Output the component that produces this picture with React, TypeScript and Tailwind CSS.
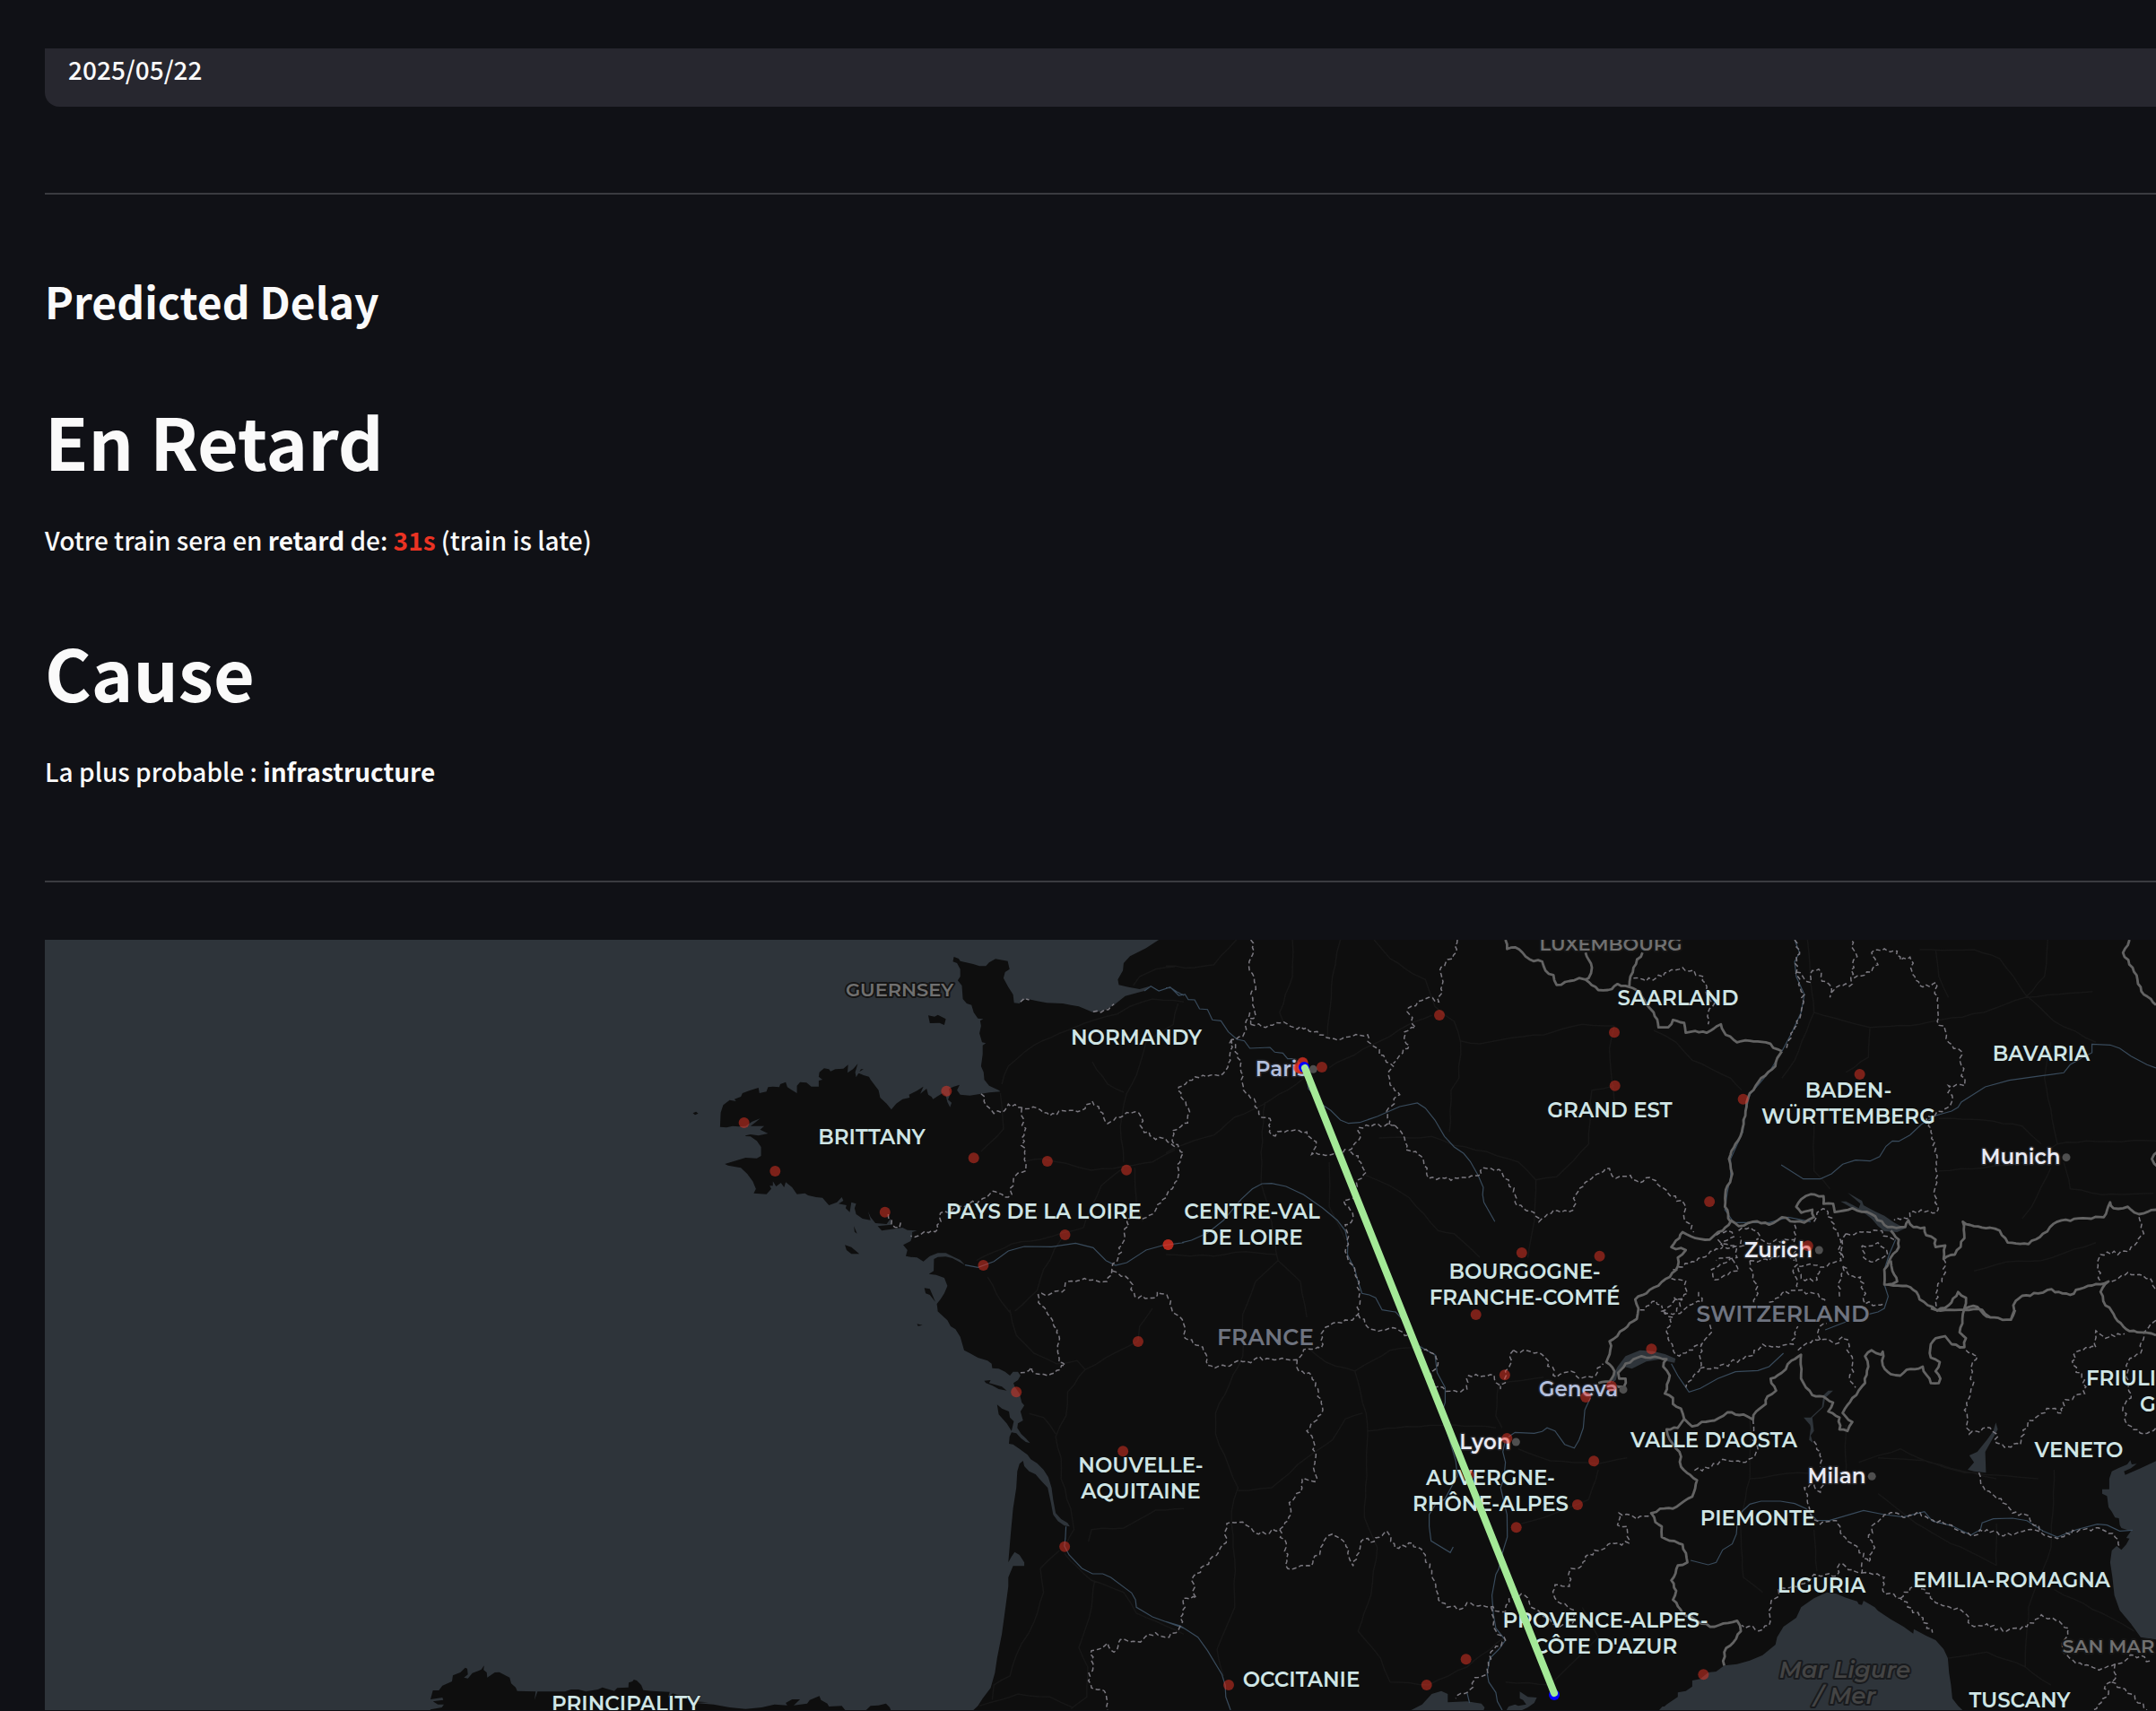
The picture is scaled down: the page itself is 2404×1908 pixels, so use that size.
import React from "react";

/* ---------- map geometry ---------- */

type Pt = [number, number];
type Tile = "A" | "B" | "C" | "D" | "E" | "F" | "G";
type Line = [Tile, string];

// Each survey tile has its own origin and scale.
const TILES: Record<Tile, [number, number, number, number]> = {
  A: [760, 1030, 2.8, 3],
  B: [1300, 1030, 2.8, 3],
  C: [1844, 1030, 2.8, 3],
  D: [760, 1460, 2.8, 3],
  E: [1300, 1460, 2.8, 3],
  F: [1844, 1460, 2.8, 3],
  G: [440, 1820, 3, 3],
};

function pts([tile, s]: Line): Pt[] {
  const [ox, oy, sx, sy] = TILES[tile];
  return s
    .trim()
    .split(/\s+/)
    .map((p) => {
      const [x, y] = p.split(",").map(Number);
      return [ox + x / sx, oy + y / sy] as Pt;
    });
}

function noise(n: number) {
  const v = Math.sin(n * 12.9898) * 43758.5453;
  return (v - Math.floor(v)) * 2 - 1;
}

// Midpoint displacement gives borders and coasts their irregular outline.
function roughen(p: Pt[], amount: number, step: number): Pt[] {
  const out: Pt[] = [p[0]];
  for (let i = 1; i < p.length; i++) {
    const [x0, y0] = p[i - 1];
    const [x1, y1] = p[i];
    const len = Math.hypot(x1 - x0, y1 - y0);
    const n = Math.max(1, Math.round(len / step));
    for (let k = 1; k < n; k++) {
      const t = k / n;
      const d = noise(x0 * 1.7 + y0 * 0.9 + k * 3.1) * amount;
      out.push([x0 + (x1 - x0) * t - ((y1 - y0) / len) * d, y0 + (y1 - y0) * t + ((x1 - x0) / len) * d]);
    }
    out.push([x1, y1]);
  }
  return out;
}

const toPath = (p: Pt[]) => "M" + p.map(([x, y]) => x.toFixed(1) + " " + y.toFixed(1)).join("L");
const toLines = (l: Line[], amount: number, step: number) =>
  l.map((x) => toPath(amount ? roughen(pts(x), amount, step) : pts(x))).join("");
const toArea = (l: Line[]) => toPath(l.flatMap(pts)) + "Z";

const atlantic: Line[] = [
  ["A", "-1988,57 1490,57 1450,85 1400,112 1380,135 1378,160 1362,190 1365,208 1395,215 1430,222 1462,212 1445,228 1385,245 1350,275 1320,293 1285,300 1240,280 1215,275 1190,270 1140,268 1110,262 1080,255 1060,262 1055,270 1038,268 1035,240 1020,215 1005,185 1010,165 1024,155 1018,128 980,121 960,133 950,145 930,145 910,138 870,128 865,120 850,114 847,130 860,135 870,155 870,180 862,193 875,210 878,255 890,270 905,275 912,300 925,320 942,322 932,328 935,345 930,370 938,400 950,403 940,410 940,440 935,480 943,500 945,525 960,545 990,560 995,565 960,568 935,572 900,578 870,575 860,560 868,542 850,548 835,555 838,575 832,592 843,602 838,617 830,600 825,580 815,570 800,580 785,590 780,582 770,575 765,555 745,572 755,548 735,562 710,575 712,585 690,590 670,605 655,625 640,605 620,585 615,560 590,525 585,515 568,510 550,502 568,490 560,490 545,517 542,500 550,472 535,490 518,502 520,475 505,488 480,490 465,497 460,490 445,487 430,500 428,515 440,525 428,528 428,548 405,548 390,535 370,533 360,545 360,570 345,560 330,550 325,533 308,540 305,550 285,548 270,550 265,565 243,570 240,552 215,560 190,570 185,582 165,590 170,597 150,593 130,610 122,635 120,683 140,685 160,680 178,682 200,680 220,665 245,655 230,668 215,680 240,680 258,680 245,692 270,705 240,712 215,708 200,712 190,735 180,752 180,725 160,715 178,708 178,690 182,706 200,714 215,715 235,730 248,750 248,780 235,788 200,786 165,797 135,807 145,812 185,820 205,840 222,865 232,890 225,905 265,908 280,890 275,880 285,880 285,865 295,882 310,870 320,885 325,868 345,885 360,908 385,905 395,912 420,918 440,920 460,945 485,935 500,918 505,930 490,940 515,945 512,955 525,968 530,935 545,940 540,955 545,975 565,990 590,995 582,965 590,985 605,1005 640,1008 652,990 655,1010 612,1015 625,1030 655,1025 690,1020 705,1028 735,1030 720,1035 720,1050 715,1065 692,1078 705,1095 700,1115 715,1118 735,1120 755,1133 775,1115 800,1105 825,1105 850,1118 870,1128 885,1145 865,1133 845,1122 825,1117 800,1118 788,1125 787,1165 772,1175 795,1178 820,1188 830,1215 820,1240 808,1260 797,1275 800,1300"],
  ["D", "795,5 810,20 830,40 840,60 855,70 870,95 878,125 882,140 900,150 925,165 955,175 968,185 970,200 990,202 1010,212 1025,225 1035,212 1050,212 1058,225 1050,240 1036,250 1040,262 1055,285 1062,315 1070,325 1058,345 1066,375 1050,385 1048,400 1060,420 1075,435 1088,451 1075,447 1060,435 1045,418 1030,415 1024,430 1022,453 1035,455 1055,470 1080,490 1090,505 1110,518 1130,540 1145,565 1155,600 1160,640 1168,685 1185,705 1205,718 1212,730 1195,727 1175,712 1160,690 1153,650 1143,600 1125,580 1105,555 1085,545 1070,528 1066,510 1055,520 1048,545 1045,600 1035,670 1028,750 1020,850 1030,830 1040,815 1055,825 1070,850 1070,862 1035,862 1028,880 1020,900 1020,930 1010,1010 1000,1090 985,1170 978,1220 965,1270 940,1305 925,1330 905,1350 655,1350 650,1335 638,1322 615,1328 590,1330 570,1350 515,1350 500,1330 460,1332 455,1322 435,1310 430,1297 400,1310 392,1322 350,1328 370,1308 345,1308 325,1320 330,1328 290,1325 250,1335 200,1340 150,1335 100,1325 40,1320"],
  ["G", "1050,238 1000,235 960,218 930,208 915,222 920,203 860,200 832,197 825,180 810,165 800,162 796,168 783,172 782,188 745,190 735,200 695,188 680,195 640,202 615,195 590,195 570,202 478,202 468,230 472,202 410,200 405,188 390,175 385,155 350,137 335,138 310,155 308,138 298,130 299,115 290,128 280,133 260,140 245,158 232,155 245,145 243,125 236,122 220,138 195,148 192,168 160,182 148,198 128,198 120,228 160,222 163,230 128,235 145,245 165,245 158,255 120,262 118,270 -1170,270"],
];

const waters: Line[][] = [
  atlantic,
  [["F", "15,1350 40,1325 75,1300 75,1285 100,1280 120,1265 120,1245 145,1240 170,1218 195,1215 220,1195 260,1190 300,1178 340,1160 380,1125 385,1100 405,1065 445,1035 460,1000 500,970 540,950 570,955 600,968 635,980 640,990 650,992 655,978 690,1000 700,1012 740,1040 780,1065 810,1088 812,1073 850,1095 880,1110 905,1140 918,1170 922,1220 928,1260 932,1305 950,1330 970,1350"]],
  [["F", "1580,505 1520,535 1472,557 1468,545 1490,535 1508,520 1492,522 1488,508 1478,522 1450,535 1430,545 1422,570 1422,605 1400,605 1400,620 1415,628 1420,665 1430,680 1440,700 1452,702 1455,725 1460,735 1490,745 1475,768 1485,770 1475,790 1460,808 1445,795 1430,810 1425,850 1432,900 1438,960 1455,1010 1490,1055 1520,1100 1580,1110"]],
  [["E", "755,1350 800,1325 830,1290 860,1280 880,1290 880,1318 940,1315 985,1322 995,1335 990,1350"]],
  [["E", "1060,1350 1070,1332 1090,1325 1100,1330 1125,1325 1115,1310 1105,1305 1105,1282 1130,1300 1158,1302 1150,1320 1130,1335 1100,1350"]],
  [["E", "1535,1350 1550,1332 1580,1328 1580,1350"]],
  [["C", "605,903 650,930 655,945 690,965 720,980 750,1003 785,1022 760,1035 720,1032 700,1015 680,990 650,965 620,955 583,932 600,932 640,955 645,940"]],
  [["E", "1393,250 1396,225 1410,195 1435,160 1480,140 1520,143"], ["F", "35,153 68,168 65,182 45,178"], ["E", "1545,170 1500,178 1455,202 1430,195 1410,215 1405,240"]],
  [["F", "560,275 535,300 530,330 495,365 500,410 490,425 497,450 485,440 490,400 488,390 468,365 490,365 525,330 530,290 545,275"]],
  [["F", "1068,382 1074,405 1035,480 1037,550 1000,545 980,540 1000,515 985,492 1010,480 1040,440 1060,410"]],
];

const islands: Line[][] = [
  [["A", "770,310 790,314 800,308 825,322 820,342 805,335 775,336"]],
  [["A", "35,637 45,632 52,638 42,643"]],
  [["A", "510,1078 530,1085 555,1108 530,1108 515,1095"]],
  [["A", "758,1222 775,1225 785,1250 792,1268 775,1245 762,1240"]],
  [["A", "538,1015 548,1040 540,1034"]],
  [["D", "735,52 752,56 738,59"]],
  [["D", "945,242 965,240 960,250 1000,262 1015,275 990,270 970,258 950,250"]],
  [["D", "985,322 1000,335 1022,345 1025,365 1037,378 1030,410 1015,385 990,355"]],
];

const rivers: Line[] = [
  ["A", "1445,228 1465,212 1490,228 1525,216 1545,230 1568,243"],
  ["B", "0,218 15,217 40,243 60,240 70,257 90,258 105,288 130,290 145,325 172,328 195,365 222,390 245,395 262,420 325,417 340,433 365,436 380,455 400,455 430,480 440,520 445,555 490,610 515,628 545,660 570,671 605,668 660,648 730,615 785,603 810,620 840,660 870,715 900,750 930,772 950,798 975,845 991,885 989,910 993,935 1027,1000"],
  ["A", "885,1145 925,1153 975,1133 1020,1098 1070,1083 1155,1084 1230,1072 1285,1087 1325,1130 1355,1146 1390,1137 1450,1095 1500,1080 1568,1070"],
  ["B", "50,1070 80,1062 130,1038 180,995 235,925 270,890 300,873 330,872 375,882 430,910 490,955 535,995 560,1030 568,1070 567,1110 590,1160 600,1200 612,1240 635,1245 655,1255 675,1295 715,1302"],
  ["E", "715,10 760,60 780,120 840,155 847,215 872,265 872,315 862,345 880,420 905,510 910,560 890,600 870,640 845,650 822,690 822,730 828,778 888,817 897,798"],
  ["E", "1060,440 1052,480 1060,515 1055,570 1045,600 1065,690 1066,765 1050,820 1040,870 1030,890 1018,960 1022,1020 1030,1070 1060,1110 1040,1140 1012,1170 1003,1220 1008,1250 1030,1285 1035,1315 1050,1344"],
  ["E", "1070,430 1090,415 1150,418 1175,412 1190,400 1215,410 1245,455 1275,467 1290,440 1303,400 1308,340 1325,300"],
  ["E", "940,1285 948,1320"],
  ["F", "55,185 75,225 110,280 145,268 200,235 255,212 325,208 360,195 405,150"],
  ["D", "1200,730 1198,770 1195,795 1210,825 1250,870 1283,888 1315,888 1340,900 1405,952 1417,975 1420,1000 1470,1032 1568,1070"],
  ["E", "0,1048 45,1062 100,1100 130,1145 175,1225 185,1260 187,1300 202,1344"],
  ["C", "440,57 455,100 440,130 445,180 470,240 460,300 430,370 400,430 360,500 300,575 285,640 278,700 240,790 240,850 230,900 222,960 250,1003 360,1003 420,985 490,1000"],
  ["C", "398,810 467,857 520,857 555,840 590,808 630,794 675,797 705,782 725,748 745,730 765,731 800,710 835,675 880,645 930,630 950,617 960,600 1035,549 1110,527 1210,512 1280,502 1300,475 1340,450 1368,435 1368,406 1425,409 1455,420 1490,446 1540,475 1568,486"],
  ["F", "115,843 170,858 195,850 215,808 245,788 258,755 260,725 275,680 300,655 335,645 395,645 440,653 475,670 510,710 550,709 655,676 720,690 780,698 845,680 870,712 930,727 990,758 1020,740 1025,718 1060,704 1120,702 1165,710 1215,745 1260,765 1320,740 1385,722 1415,725 1455,745 1495,742"],
  ["C", "755,1060 735,1110 720,1160 720,1210 732,1250 720,1290 700,1302 670,1310"],
  ["F", "535,72 600,45"],
];

const nationalBorders: Line[] = [
  ["B", "1060,57 1065,88 1090,82 1135,122 1175,130 1185,160 1210,175 1220,208 1260,195 1290,185 1310,190 1320,185 1330,150 1310,100"],
  ["B", "1310,190 1350,225 1380,225 1410,205 1447,215 1450,180 1460,150 1488,100"],
  ["B", "1447,215 1480,230 1510,285 1523,300 1538,350 1568,350 1583,325 1618,335 1623,368 1653,362 1688,368 1733,340 1748,375 1783,400 1823,395 1873,400 1923,430"],
  ["C", "400,430 370,490 335,520 300,570 290,600 280,660 275,700 255,740 235,790 245,840 230,880 222,950 240,1000"],
  ["C", "240,995 265,1015 310,1000 360,1010 400,985 440,1000 470,1003 500,985 495,960 460,970 445,950 460,925 490,908 530,915 530,940 560,940 565,968 620,955 680,975 730,1018 785,1018 795,995 810,1018 845,1020 850,1045 880,1060 880,1085 910,1080 905,1125 940,1110 970,1055 965,1000 1000,1015 1050,1020 1080,1030 1105,1070 1170,1075 1215,1040 1260,1000 1340,988 1405,985 1425,935 1435,955 1480,950 1515,975 1568,960"],
  ["C", "240,1000 215,1030 190,1045 175,1060 130,1055 90,1035 80,1055 55,1085 100,1095 75,1120 75,1150 50,1185 0,1220 -23,1240 -58,1260 -48,1290 -53,1325 -93,1360 -138,1400 -133,1415 -148,1470 -123,1500 -138,1535 -173,1540"],
  ["C", "740,1030 765,1060 765,1085 740,1120 720,1160 720,1210 790,1215 820,1235 830,1260 870,1285 885,1298 920,1280 950,1235 975,1255 970,1290 985,1285 1010,1285 1030,1310 1050,1320 1115,1328 1130,1265 1150,1248 1200,1240 1230,1228 1265,1235 1300,1245 1330,1225 1420,1200 1395,1235 1410,1280 1430,1300 1440,1320 1475,1360 1510,1370 1568,1380"],
  ["C", "740,1130 745,1165 760,1200 730,1210"],
  ["E", "1400,260 1430,262 1435,235 1415,235 1412,215 1435,185 1485,160 1540,165 1563,170 1553,195 1573,225 1558,285 1583,300 1583,320 1608,335 1618,370 1643,395 1673,380 1713,375 1753,348 1803,355 1833,372 1843,345 1873,320 1878,295 1905,275 1888,235 1923,215 1953,175 1983,155 1983,235 2018,290 2053,295 2083,315 2068,345 2103,365 2103,405 2128,410 2143,380 2113,350 2143,300 2163,275 2183,250 2193,195 2183,160 2203,140 2233,155 2238,145 2238,190 2263,220 2293,225 2313,205 2363,195 2388,250 2413,250 2418,235 2403,210 2416,180 2388,165 2388,120 2403,100 2433,93 2453,120 2493,130 2498,100 2478,80 2488,20 2493,0"],
  ["F", "865,0 895,8 925,5 970,5 1025,5 1050,30 1115,38 1128,5"],
  ["F", "95,370 75,400 40,405 50,440 80,480 85,530 135,575 120,630 60,670 20,670 -8,685 5,715 25,730 25,765 90,790 105,850 75,860 55,910 70,945 60,975 90,1020 150,1055 190,1065 260,1045 272,1080 220,1150 220,1195"],
  ["C", "1485,57 1480,75 1465,100 1495,150 1510,190 1530,240 1568,275"],
  ["C", "1575,765 1555,790 1575,818"],
];

const regionBorders: Line[] = [
  ["A", "935,572 950,610 975,638 1000,635 1020,607 1060,618 1110,620 1150,645 1200,630 1260,622 1282,597 1305,630 1330,672 1380,645 1415,632 1435,650 1440,690 1480,725 1510,722 1545,755"],
  ["A", "1062,620 1070,700 1062,720 1072,780 1075,830 1050,838 1035,880 1020,918 970,898 930,930 860,955 820,965 805,985 800,1025 750,1040 715,1048"],
  ["A", "645,975 655,1010 680,1020 685,1000"],
  ["A", "1058,265 1070,253 1085,258"],
  ["A", "1285,298 1320,292 1350,272"],
  ["B", "205,390 200,440 195,470 170,512 115,510 40,550 45,580 70,620 68,670 20,695 25,740 55,770 35,810 38,850 20,890 0,920 -34,965 -84,990 -119,990 -129,1060 -149,1110 -169,1165 -184,1200 -224,1195 -264,1195 -314,1205 -324,1235 -399,1245 -389,1280 -374,1295 -354,1330 -334,1380 -334,1470 -314,1480 -359,1510 -414,1505 -419,1487 -454,1505"],
  ["A", "1345,1165 1400,1200 1415,1250 1480,1255 1485,1235 1515,1245 1530,1290 1567,1340 1572,1390 1627,1420 1642,1480 1702,1485 1727,1470 1777,1472 1792,1458 1862,1462 1922,1462 1942,1428 1997,1422 1997,1375 2032,1340 2082,1330 2112,1310 2117,1240 2102,1160 2072,1100 2082,1050 2072,1010 2092,1000 2087,960 2067,930 2102,920 2107,870 2137,835 2112,780 2082,762 2112,730 2114,685 2162,675 2227,678"],
  ["B", "265,340 300,348 355,335 400,350 440,352 480,375 525,388 570,382 630,375 640,405 700,470 710,480 695,510 710,550 730,575 695,620 697,675"],
  ["B", "205,390 225,440 235,500 250,570 280,600 290,640 325,655 330,710 380,695 440,700 470,745 455,775 520,775 570,762"],
  ["B", "265,57 275,95 260,130 270,170 280,210 265,240 280,310 262,320 265,340"],
  ["B", "262,300 250,330 240,380 205,390"],
  ["B", "910,57 905,100 870,145 855,160 862,210 852,265 820,250 757,285 770,340 780,350 745,365 745,395 760,410 710,470"],
  ["B", "715,678 745,720 750,760 780,765 805,800 820,855 870,855 910,855 985,842 990,820 1040,825 1070,860 1090,910 1095,945 1150,970 1165,1000 1210,962 1270,962 1280,910 1330,855 1385,822 1405,855 1450,845 1480,870 1510,852 1568,905 1618,940 1618,990 1643,1010 1648,1035"],
  ["B", "1460,185 1500,195 1568,165 1613,150 1678,180 1688,240 1713,270 1693,300 1693,340"],
  ["C", "445,165 490,200 495,160 515,155 525,195 555,215 550,250 580,210 620,205 615,180 625,150 630,100 615,57"],
  ["C", "625,185 660,175 700,140 680,100 720,87 760,95 770,125 800,115 815,180 840,215 880,200 885,260 885,330 910,360 920,400 960,430 965,500 970,545 920,545 930,600 880,640 850,660 870,710 885,790 880,880 882,970 810,965 790,990 750,995"],
  ["C", "440,57 455,105 440,135 450,180 470,240 460,300 440,350 410,425"],
  ["C", "1515,985 1530,1040 1490,1085 1480,1100 1395,1110 1385,1160 1395,1200"],
  ["C", "1430,1200 1480,1170 1550,1190 1568,1230"],
  ["C", "905,1125 905,1180 885,1230 882,1285"],
  ["C", "265,1030 300,1020 330,1045 320,1060 350,1070 440,1060"],
  ["C", "440,1010 440,1060 445,1130 440,1180 450,1225"],
  ["C", "500,1000 510,970 540,960 555,1000 575,1040 585,1130 540,1150 500,1145 450,1150 460,1190 510,1195 520,1160"],
  ["C", "590,1150 580,1200 580,1250"],
  ["C", "590,1150 610,1180 645,1185 655,1230 660,1275 720,1275"],
  ["C", "600,1040 650,1035 700,1030 750,1060"],
  ["C", "600,1040 590,1080 585,1130"],
  ["C", "650,1080 700,1070 730,1110 690,1135 655,1120 650,1080"],
  ["C", "300,1130 310,1180 325,1240 310,1290"],
  ["C", "200,1060 250,1080 260,1120 210,1140 180,1160 190,1195 220,1180 265,1165 240,1120 195,1130"],
  ["C", "195,1045 230,1030 250,1050 210,1075 230,1090 280,1080 270,1050"],
  ["C", "60,1160 110,1140 170,1110 215,1085"],
  ["C", "55,1190 100,1200 105,1240 60,1270 25,1300 60,1310 90,1260 60,1250"],
  ["C", "140,1235 150,1270 110,1280 70,1310"],
  ["C", "300,1130 360,1130 400,1110 440,1130"],
  ["C", "360,1270 400,1240 440,1230 500,1240 540,1270"],
  ["C", "-43,1295 7,1265 27,1290"],
  ["F", "30,10 60,30 40,80 60,130 80,160 150,120"],
  ["F", "175,55 180,80 150,120 145,200 100,265"],
  ["F", "145,200 200,200 270,170 300,160 340,120 390,130 435,120 450,60"],
  ["F", "450,140 480,115 520,105 580,115 590,95 605,105 610,150 620,190 615,245 630,265"],
  ["F", "520,105 515,70 540,50"],
  ["E", "1085,140 1140,145 1180,160 1220,230 1265,210 1290,235 1330,230 1365,185"],
  ["E", "1085,140 1070,200 1045,270 1025,225 945,225 940,270 900,275 840,265 825,215 845,200 842,155 780,125"],
  ["E", "600,20 640,70 720,68 740,80 775,100"],
  ["E", "410,172 415,210 455,225 475,270 490,340 440,410 465,460 465,580 425,570 425,600 385,650 390,690 360,735 355,740 290,755 240,715 190,720 190,770 165,815 120,860 80,910 95,970 55,970 60,1000 45,1060"],
  ["E", "45,1062 10,1100 -2,1100 -32,1085 -92,1115 -142,1108 -162,1150 -182,1120 -232,1145 -227,1200 -242,1245 -232,1270 -192,1280 -182,1344"],
  ["E", "355,740 375,800 380,870 455,862 490,790 520,755 560,785 585,862 620,770 650,780 690,745 715,800 770,785 810,825 830,890 860,985 910,1008 940,985 1010,1000 1060,1015 1080,965 1120,960 1140,1000 1190,1035 1230,1065 1265,1060 1275,1010 1215,970 1215,925 1260,930 1265,870 1300,860 1310,830 1390,785 1445,785 1440,730 1410,725 1415,685 1470,705 1515,685"],
  ["E", "1015,1000 1025,1070 1060,1110 1010,1160 1005,1220 965,1235 950,1275 905,1305"],
  ["F", "310,372 305,420 325,470 315,495 275,515 215,505 180,530 120,545"],
  ["F", "500,445 520,480 520,530"],
  ["F", "530,590 520,615 500,590 470,600 480,650 490,690 520,722 570,710 590,760 640,805 670,850 690,800 670,770 690,720 720,690 750,683 790,700 830,680 860,705 930,725 990,760 1040,740 1080,760 1140,748 1200,745 1260,770 1330,740 1400,740 1440,765 1455,800"],
  ["F", "1015,550 1035,610 1100,655 1120,685 1160,690 1215,745"],
  ["F", "650,850 650,885 580,855 570,895 500,890 470,920 400,935 365,990 360,1060 340,1075 275,1060"],
  ["F", "650,885 720,900 715,945 770,970 830,1030 870,1085"],
  ["F", "770,970 810,930 845,940 880,985 960,1010 1000,1065 1040,1055 1090,1080 1165,1065 1210,1025 1295,1070 1275,1120 1290,1160 1340,1195 1390,1210 1440,1190 1500,1160 1550,1180"],
  ["F", "1440,1190 1445,1230 1410,1260 1420,1290 1370,1344"],
  ["F", "1430,1250 1490,1290 1540,1344"],
  ["F", "975,140 1010,160 990,200 995,260 970,340 985,420 1050,400 1070,420 1070,450 1095,465 1145,455 1170,375 1240,335 1275,350 1285,305 1345,285 1345,240 1310,190 1320,145 1380,130 1380,75 1410,100 1470,85"],
  ["F", "1568,40 1530,80 1520,150 1480,180 1475,230 1490,300 1465,330 1480,390 1530,420 1568,400"],
];

const roads: Line[] = [
  ["B", "395,57 395,180 355,300 370,340"],
  ["B", "545,57 520,180 505,380"],
  ["B", "650,57 700,120 770,170 810,190 840,280 900,330 920,400 915,520 890,560 885,700"],
  ["B", "510,485 560,455 640,410 700,380 750,345 830,310"],
  ["B", "920,395 980,405 1080,385 1180,375 1300,340 1400,345"],
  ["B", "1400,345 1385,420 1390,500 1400,600"],
  ["B", "1400,545 1330,560 1320,740 1220,850 1155,860 1150,1000 1130,1120"],
  ["B", "625,845 700,880 760,920 850,1030 900,1040 980,1120"],
  ["B", "665,720 760,720 830,715 900,745 1000,765 1100,800 1155,860"],
  ["B", "0,770 60,740 150,710 215,650 300,610 380,560 430,520"],
  ["B", "310,600 300,700 297,870 330,1000 350,1130 420,1200 440,1320"],
  ["B", "350,1130 280,1200 240,1310"],
  ["B", "0,1110 150,1115 250,1100 345,1110"],
  ["B", "510,800 510,950 560,1060"],
  ["B", "0,145 90,150 150,140 220,57"],
  ["A", "1000,540 1020,480 1100,410 1180,370 1260,335 1360,305 1400,280 1470,255 1568,265"],
  ["A", "1550,270 1535,340 1450,400 1420,510 1390,570 1370,680 1380,800"],
  ["A", "1282,465 1330,540 1380,567"],
  ["A", "1075,797 1130,790 1200,805 1280,828 1380,815 1470,800 1540,760"],
  ["A", "1415,820 1420,950 1440,1000"],
  ["A", "1380,820 1310,880 1280,950 1255,1020 1120,1060 1030,1075 920,1130"],
  ["A", "955,1185 1000,1270 1030,1310"],
  ["A", "995,570 1005,690 935,765"],
  ["A", "1185,1060 1130,1160 1110,1230 1040,1300"],
  ["A", "1410,210 1430,180 1480,155 1540,147"],
  ["D", "1470,0 1430,60 1425,110 1360,145 1260,205 1205,280 1200,360 1168,430 1185,500 1185,570 1215,670 1225,740 1200,790"],
  ["D", "1025,5 1045,90 1100,150 1170,185 1235,175 1260,205"],
  ["D", "1195,820 1280,910 1380,950 1420,1020 1568,1090"],
  ["D", "1290,910 1280,1000 1240,1135 1268,1200 1265,1300 1215,1340"],
  ["D", "1180,810 1120,870 1130,950 1100,1050 1045,1160 1025,1230 975,1260 970,1310"],
  ["D", "1270,780 1280,740 1380,735 1480,675 1568,670"],
  ["D", "1085,352 1130,365 1168,420"],
  ["D", "930,1330 1050,1290 1150,1300 1220,1335"],
  ["E", "240,20 240,160 155,350 155,420 225,600 205,680 215,840 215,1000 160,1140 180,1230"],
  ["E", "225,610 330,600 440,500 520,440 560,370 615,350"],
  ["E", "440,130 500,180 590,210 700,140 800,125"],
  ["E", "590,210 625,350 630,420 620,700 660,800 640,960 600,1080 670,1170 700,1250"],
  ["E", "630,410 750,395 900,390 1030,400"],
  ["E", "1100,470 1200,510 1350,520 1440,500"],
  ["E", "1050,400 1030,360 1040,250 1180,230"],
  ["E", "700,1250 820,1260 940,1200 1060,1100"],
  ["E", "1060,1250 1200,1260 1350,1100 1300,1000"],
  ["E", "1350,540 1320,640 1180,700 1110,720"],
  ["C", "480,57 490,200 500,300 600,330 675,350 830,340 1030,300 1160,250 1370,230"],
  ["C", "675,350 670,450 600,500"],
  ["C", "830,90 1000,90 1080,120 1160,240 1250,330 1380,400"],
  ["C", "500,300 440,460 400,520"],
  ["C", "880,90 890,180 920,250"],
  ["C", "1230,57 1220,180 1160,250"],
  ["C", "0,360 70,400 120,460 240,520 275,560"],
  ["C", "890,830 1030,820 1170,800 1260,740 1350,730 1568,730"],
  ["C", "1260,740 1250,690 1220,520 1240,400"],
  ["C", "1280,800 1300,890 1400,910 1560,905"],
  ["C", "1240,820 1180,950 1150,990"],
  ["C", "890,655 1030,660 1150,680 1210,740"],
  ["C", "500,670 500,830 550,890"],
  ["C", "1000,1165 1100,1135 1210,1130 1380,1070"],
  ["F", "300,370 300,570 270,700 280,900 340,950"],
  ["F", "300,570 450,550 600,560"],
  ["F", "700,500 850,510 970,550 1200,570"],
  ["F", "700,620 820,720 900,770 1070,860"],
  ["F", "500,740 510,880"],
  ["F", "600,560 600,390"],
  ["F", "640,515 770,470 860,515 1070,570"],
  ["F", "1250,540 1240,800 1170,1000 1160,1200"],
  ["F", "1070,720 1070,860"],
  ["F", "1250,940 1400,1020 1500,1080"],
  ["F", "920,1170 1040,1150 1160,1200 1240,1260"],
];

const stations: Line[] = [
  ["A", "827,563 195,669 292,831 635,968 912,787 1142,798 1389,827 1197,1044 942,1146 1519,1077 1519,1077"],
  ["B", "854,309 1400,367 1402,545 487,483 1111,1104 1354,1115 427,467 427,469 414,484 417,486 420,488"],
  ["C", "643,507 279,590 174,933 481,1081"],
  ["D", "1425,111 1045,280 1378,478 1196,797"],
  ["E", "968,21 1058,223 1516,136 1391,260 1311,297 1065,435 946,558 1336,511 1285,657 1094,733 937,1174 814,1260 196,1260"],
  ["F", "155,1225"],
];

const cityDots: Line[] = [
  ["B", "460,490"],
  ["C", "1288,785 516,1095"],
  ["E", "1428,272 1093,447"],
  ["F", "681,562"],
];

type Label = [string, number, number];

const regions: Label[] = [
  ["NORMANDY", 1267, 1166],
  ["BRITTANY", 972, 1277],
  ["PAYS DE LA LOIRE", 1164, 1360],
  ["CENTRE-VAL", 1396, 1360],
  ["DE LOIRE", 1396, 1389],
  ["SAARLAND", 1871, 1122],
  ["GRAND EST", 1795, 1247],
  ["BOURGOGNE-", 1700, 1427],
  ["FRANCHE-COMTÉ", 1700, 1456],
  ["BADEN-", 2061, 1225],
  ["WÜRTTEMBERG", 2061, 1254],
  ["BAVARIA", 2276, 1184],
  ["AUVERGNE-", 1662, 1657],
  ["RHÔNE-ALPES", 1662, 1686],
  ["PROVENCE-ALPES-", 1790, 1816],
  ["CÔTE D'AZUR", 1790, 1845],
  ["OCCITANIE", 1451, 1882],
  ["NOUVELLE-", 1272, 1643],
  ["AQUITAINE", 1272, 1672],
  ["VALLE D'AOSTA", 1911, 1615],
  ["PIEMONTE", 1960, 1702],
  ["LIGURIA", 2031, 1777],
  ["EMILIA-ROMAGNA", 2243, 1771],
  ["VENETO", 2318, 1626],
  ["FRIULI", 2365, 1546],
  ["G", 2395, 1575],
  ["TUSCANY", 2252, 1905],
  ["PRINCIPALITY", 698, 1909],
];
const countries: Label[] = [
  ["FRANCE", 1411, 1501],
  ["SWITZERLAND", 1988, 1475],
];
const smallStates: Label[] = [
  ["GUERNSEY", 1003, 1112],
  ["LUXEMBOURG", 1796, 1061],
  ["SAN MAR", 2351, 1844],
];
const seaNames: Label[] = [
  ["Mar Ligure", 2057, 1872],
  ["/ Mer", 2057, 1901],
];
const cities: Label[] = [
  ["Munich", 2253, 1299],
  ["Zurich", 1983, 1403],
  ["Lyon", 1656, 1617],
  ["Milan", 2048, 1655],
];
const borderCities: Label[] = [
  ["Paris", 1429, 1201],
  ["Geneva", 1760, 1558],
];

function Labels({ items, className }: { items: Label[]; className: string }) {
  return (
    <g className={className} textAnchor="middle" strokeLinejoin="round" paintOrder="stroke">
      {items.map(([name, x, y]) => (
        <text key={name} x={x} y={y}>
          {name}
        </text>
      ))}
    </g>
  );
}

function RouteMap() {
  return (
    <svg
      viewBox="50 1049 2354 859"
      preserveAspectRatio="xMinYMin slice"
      role="img"
      aria-label="Train route map"
      className="block w-full bg-[#0e0e0e] font-['Montserrat',Inter,sans-serif]"
    >
      <path d={toLines(roads, 1, 12)} fill="none" stroke="#171717" strokeWidth="1.5" />
      <path d={waters.map(toArea).join("")} fill="#2e343a" />
      <path d={islands.map(toArea).join("")} fill="#0e0e0e" />
      <path d={toLines(rivers, 0, 1)} fill="none" stroke="#394b5c" strokeWidth="1.2" />
      <path d={toLines(regionBorders, 2.4, 4)} fill="none" stroke="#7b7980" strokeWidth="1.5" strokeDasharray="5 3" />
      <path d={toLines(nationalBorders, 1.4, 5)} fill="none" stroke="#636363" strokeWidth="2.8" strokeLinejoin="round" />
      <g fill="#4f4f4f">
        {cityDots.flatMap(pts).map(([x, y], i) => (
          <circle key={i} cx={x} cy={y} r="4.5" />
        ))}
      </g>
      <Labels items={smallStates} className="fill-[#707070] stroke-[#151515] stroke-4 text-[21px] font-semibold" />
      <Labels items={countries} className="fill-[#6f7480] stroke-[#0e0e0e] stroke-2 text-[25px] font-semibold" />
      <Labels items={seaNames} className="fill-[#444444] stroke-[#191b1e] stroke-4 text-[26px] font-semibold italic" />
      <Labels items={regions} className="fill-[#cfe5e5] stroke-[#0e0e0e] stroke-1 text-[23px] font-semibold" />
      <Labels items={cities} className="fill-[#e9eaf3] stroke-[#26262a] stroke-3 text-[23px] font-semibold" />
      <Labels items={borderCities} className="fill-[#b3bfdc] stroke-[#202228] stroke-3 text-[23px] font-semibold" />
      <g fill="#ea3323" fillOpacity="0.5">
        {stations.flatMap(pts).map(([x, y], i) => (
          <circle key={i} cx={x} cy={y} r="6" />
        ))}
      </g>
      <circle cx="1454" cy="1191" r="6" fill="#0000ff" />
      <circle cx="1733" cy="1891" r="6" fill="#0000ff" />
      <path d="M1455 1192L1733 1889" stroke="#a4e997" strokeWidth="8" strokeLinecap="round" />
    </svg>
  );
}

export default function App() {
  return (
    <main className="flex min-h-screen flex-col overflow-hidden bg-[#101116] pt-[54px] pl-[50px] font-['Source_Sans_Pro','Noto_Sans_CJK_SC',sans-serif] text-[28px] leading-[52px] font-medium text-[#fafafa]">
      <input
        type="text"
        aria-label="Date"
        defaultValue="2025/05/22"
        className="block w-full rounded-bl-2xl bg-[#27272f] px-[26px] pb-[18px] text-[28px] leading-[47px] outline-none"
      />
      <hr className="mt-24 border-t-2 border-[#3a3b40]" />
      <h2 className="mt-[84px] text-[48px] leading-[68px] font-semibold">Predicted Delay</h2>
      <h1 className="mt-[69px] text-[79px] leading-[106px] font-bold">En Retard</h1>
      <p className="mt-8">
        Votre train sera en <strong>retard</strong> de: <strong className="text-[#eb3323]">31s</strong> (train is late)
      </p>
      <h1 className="mt-[68px] text-[79px] leading-[106px] font-bold">Cause</h1>
      <p className="mt-8">
        La plus probable : <strong>infrastructure</strong>
      </p>
      <hr className="mt-24 border-t-2 border-[#3a3b40]" />
      <section className="mt-16">
        <RouteMap />
      </section>
    </main>
  );
}
